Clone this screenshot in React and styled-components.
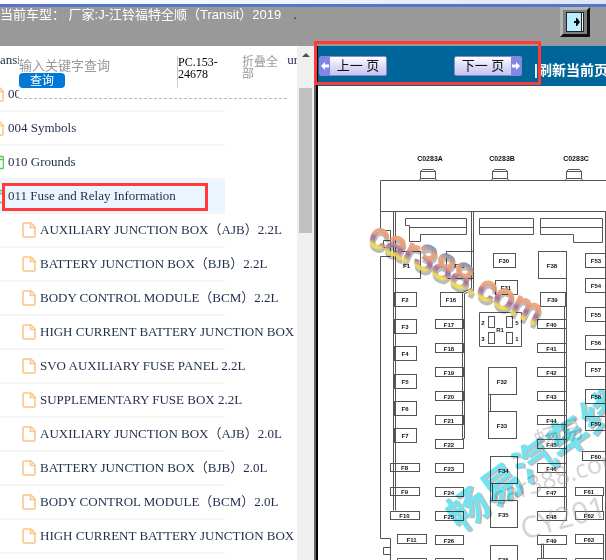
import React from 'react';
import styled, { createGlobalStyle } from 'styled-components';

const tree = [
  { title: '00', type: 'file' },
  { title: '004 Symbols', type: 'file' },
  { title: '010 Grounds', type: 'folder' },
  { title: '011 Fuse and Relay Information', type: 'folder', active: true },
  { title: 'AUXILIARY JUNCTION BOX（AJB）2.2L', type: 'file', nested: true },
  { title: 'BATTERY JUNCTION BOX（BJB）2.2L', type: 'file', nested: true },
  { title: 'BODY CONTROL MODULE（BCM）2.2L', type: 'file', nested: true },
  { title: 'HIGH CURRENT BATTERY JUNCTION BOX', type: 'file', nested: true },
  { title: 'SVO AUXILIARY FUSE PANEL 2.2L', type: 'file', nested: true },
  { title: 'SUPPLEMENTARY FUSE BOX 2.2L', type: 'file', nested: true },
  { title: 'AUXILIARY JUNCTION BOX（AJB）2.0L', type: 'file', nested: true },
  { title: 'BATTERY JUNCTION BOX（BJB）2.0L', type: 'file', nested: true },
  { title: 'BODY CONTROL MODULE（BCM）2.0L', type: 'file', nested: true },
  { title: 'HIGH CURRENT BATTERY JUNCTION BOX', type: 'file', nested: true }
];

// [label, x, y, width, height]
const fuses = [
  ['F1', 393, 251, 27, 27],
  ['F2', 394, 292, 22, 14],
  ['F3', 394, 319, 22, 14],
  ['F4', 394, 346, 22, 14],
  ['F5', 394, 374, 22, 14],
  ['F6', 394, 401, 22, 14],
  ['F7', 394, 428, 22, 14],
  ['F8', 390, 463, 29, 8],
  ['F9', 390, 487, 29, 8],
  ['F10', 390, 511, 29, 8],
  ['F11', 397, 534, 29, 9],
  ['F15', 446, 251, 27, 27],
  ['F16', 440, 292, 22, 14],
  ['F30', 493, 253, 22, 14],
  ['F31', 495, 280, 22, 14],
  ['F32', 488, 367, 28, 27],
  ['F33', 488, 411, 28, 27],
  ['F34', 490, 456, 27, 27],
  ['F35', 490, 500, 27, 27],
  ['F36', 490, 545, 27, 27],
  ['F38', 538, 251, 28, 27],
  ['F39', 540, 292, 25, 14],
  ['F53', 585, 253, 22, 14],
  ['F54', 585, 278, 22, 14],
  ['F55', 585, 307, 22, 14],
  ['F56', 585, 335, 22, 14],
  ['F57', 585, 362, 22, 14],
  ['F58', 585, 389, 22, 14],
  ['F59', 585, 416, 22, 14],
  ['F60', 582, 451, 28, 9],
  ['F61', 575, 487, 28, 8],
  ['F62', 575, 511, 28, 8],
  ['F63', 575, 534, 28, 9]
];

for (let i = 0; i < 10; i++) {
  fuses.push([`F${17 + i}`, 435, 319 + i * 24, 28, 9]);
  fuses.push([`F${40 + i}`, 537, 319 + i * 24, 29, 9]);
}

const connectors = [
  ['C0283A', 428],
  ['C0283B', 500],
  ['C0283C', 574]
];

const relayPins = [
  ['2', 488, 316, 483],
  ['5', 506, 316, 517],
  ['3', 488, 332, 483],
  ['1', 506, 332, 517]
];

const FileIcon = () => (
  <TreeIcon viewBox="0 0 14 16" stroke="#fcc384">
    <path d="M2 1h7l4 4v9q0 1-1 1H2q-1 0-1-1V2q0-1 1-1z" />
    <path d="M8.500 1v4.500H13" />
  </TreeIcon>
);

const FolderIcon = () => (
  <TreeIcon viewBox="0 0 14 16" stroke="#5cc45c">
    <path d="M2 2.500h10.500q1 0 1 1v10q0 1-1 1H2q-1 0-1-1v-10q0-1 1-1zM1 5.500h12" />
  </TreeIcon>
);

const FuseDiagram = () => (
  <Diagram viewBox="318 86 288 474" role="img" aria-label="Fuse box diagram">
    <defs>
      <linearGradient id="mark" x1="0" y1="0" x2="0" y2="1">
        <stop offset="0.200" stopColor="#7d8fb0" />
        <stop offset="0.350" stopColor="#f0a070" />
        <stop offset="0.500" stopColor="#e59a78" />
        <stop offset="0.600" stopColor="#9a6aa0" />
        <stop offset="0.680" stopColor="#b88a90" />
        <stop offset="0.760" stopColor="#efdd50" />
      </linearGradient>
    </defs>

    <g fill="none" stroke="#555" transform="translate(0.5 0.5)">
      <path d="M610 180H380V230H390V247H383V240H390M390 247V256H380V538H390V560M390 554H383V547H390" />
      <path d="M380 211H610M605 211V560" />
      <path d="M393 211V510M395 211V510" />
      <path d="M471 211V288L462 292V438M473 211V290L464 293V438H462" />
      <path d="M564 306V510M566 278V510" />
      <path d="M488 394V411M490 394V411M490 483V500M492 483V500" />
      <path d="M541 543V558M543 543V558M602 495V511M603 543V558" />
      <path d="M397 560V558H426V560M435 560V558H463V560M537 560V558H566V560M575 560V558H603V560" />
      <path d="M405 218H466V234H420V241H409V225H405ZM409 227H466" />
      <path d="M479 218H533V234H479ZM479 227H533" />
      <path d="M540 218H602V242H573V234H540ZM540 227H602" />
      <path d="M479 312H521V346H479Z" />
      {connectors.map(([label, x]) => (
        <path key={label} d={`M${x - 9} 180L${x - 8} 178V171L${x - 6} 169H${x + 5}L${x + 7} 171V178L${x + 8} 180M${x - 8} 171H${x + 7}M${x - 8} 178H${x + 7}`} />
      ))}
      {relayPins.map(([pin, x, y]) => (
        <rect key={pin} x={x} y={y} width="6" height="11" />
      ))}
      {fuses.map(([label, x, y, w, h]) => (
        <rect key={label} x={x} y={y} width={w} height={h} />
      ))}
    </g>

    <DiagramLabels>
      {connectors.map(([label, x]) => (
        <ConnectorLabel key={label} x={x + 2} y="161">{label}</ConnectorLabel>
      ))}
      {fuses.map(([label, x, y, w, h]) => (
        <text key={label} x={x + w / 2} y={y + h / 2 + 3}>{label}</text>
      ))}
      {relayPins.map(([pin, , y, x]) => (
        <text key={pin} x={x} y={y + 9}>{pin}</text>
      ))}
      <text x="500" y="332">R1</text>
    </DiagramLabels>

    <GrayMark>
      <text fontSize="25" transform="translate(538 451) rotate(-18)">畅易</text>
      <text fontSize="25" transform="translate(496 506) rotate(-18)">car388.com</text>
      <text fontSize="30" transform="translate(524 540) rotate(-16)">CY2019</text>
    </GrayMark>
    <Overprint transform="rotate(-36 460 533)">
      <BlueMark x="461" y="535" fill="#c9bab6">畅易汽车线</BlueMark>
      <BlueMark x="460" y="533" fill="#74e3f0">畅易汽车线</BlueMark>
    </Overprint>
    <Overprint transform="rotate(26 367 242)">
      <CarMark x="369" y="246" fill="#bbb" stroke="#bbb">car388.com</CarMark>
    </Overprint>
    <g opacity="0.9" transform="rotate(26 367 242)">
      <CarMark x="367" y="243" fill="url(#mark)" stroke="url(#mark)">car388.com</CarMark>
    </g>
  </Diagram>
);

const App = () => (
  <Page>
    <GlobalStyle />
    <WindowEdge />
    <Header>
      <Vehicle>当前车型： 厂家:J-江铃福特全顺（Transit）2019</Vehicle>
      <Dot>.</Dot>
      <ExitButton type="button" aria-label="退出">
        <svg width="18" height="20" viewBox="0 0 18 20">
          <path fill="#222" d="M0 0h18v20H0z" />
          <path fill="#b9efff" d="M1 1h14v18H1z" />
          <path fill="#fff" d="M16 1h1v18h-1z" />
          <path d="M8 9h2V6h1l3 4-3 4h-1v-3H8z" />
        </svg>
      </ExitButton>
    </Header>

    <Main>
      <Sidebar>
        <TreePane>
          <Tree>
            <RootRow>
              <span>ansit</span>
              <span>ur</span>
            </RootRow>
            {tree.map((item, index) => (
              <Row key={index} $nested={item.nested} $active={item.active}>
                {item.type === 'file' ? <FileIcon /> : <FolderIcon />}
                <a href="#tree">{item.title}</a>
                {item.active && <RowMark />}
              </Row>
            ))}
          </Tree>
          <SearchPanel>
            <SearchForm>
              <SearchInput placeholder="输入关键字查询" aria-label="输入关键字查询" />
              <SearchButton type="button">查询</SearchButton>
            </SearchForm>
            <Code>PC.153-24678</Code>
            <Collapse type="button">折叠全部</Collapse>
          </SearchPanel>
        </TreePane>
        <Scrollbar>
          <ScrollUp />
          <Thumb />
        </Scrollbar>
      </Sidebar>

      <Content>
        <Toolbar>
          <PageButton type="button">
            <Arrow viewBox="0 0 10 16">
              <path d="M1 8l4-4v2.500h4v3H5V12z" />
            </Arrow>
            <span>上一 页</span>
          </PageButton>
          <PageButton type="button">
            <span>下一 页</span>
            <Arrow viewBox="0 0 10 16">
              <path d="M9 8L5 4v2.500H1v3h4V12z" />
            </Arrow>
          </PageButton>
          <Refresh href="#refresh">|刷新当前页</Refresh>
          <ToolbarMark />
        </Toolbar>
        <FuseDiagram />
      </Content>
    </Main>
  </Page>
);

const GlobalStyle = createGlobalStyle`
  * {
    box-sizing: border-box;
  }

  body {
    margin: 0;
    background: #fff;
    font-family: 'Liberation Serif', 'Noto Sans CJK SC', serif;
    font-size: 13px;
    color: #1f2d4a;
  }

  button,
  input {
    margin: 0;
    padding: 0;
    border: 0;
    background: none;
    font-family: 'Liberation Sans', 'Noto Sans CJK SC', sans-serif;
  }

  a {
    color: inherit;
    text-decoration: none;
  }
`;

const Page = styled.div`
  display: flex;
  flex-direction: column;
  height: 100vh;
  overflow: hidden;
`;

const WindowEdge = styled.div`
  flex: none;
  height: 7px;
  background: linear-gradient(90deg, #fff, #dfe6f7);
  border-bottom: 3px solid #5577c9;
`;

const Header = styled.header`
  display: flex;
  flex: none;
  align-items: flex-start;
  height: 39px;
  padding-right: 16px;
  background: #999;
  color: #fff;
  font-family: 'Liberation Sans', 'Noto Sans CJK SC', sans-serif;
  line-height: 16px;
  white-space: pre;
`;

const Vehicle = styled.span`
  flex: none;
`;

const Dot = styled.span`
  margin-left: 12px;
  color: #222;
`;

const ExitButton = styled.button`
  display: flex;
  align-items: center;
  justify-content: center;
  width: 30px;
  height: 30px;
  margin-left: auto;
  border: 3px solid;
  border-color: #b4b4b4 #111 #111 #b4b4b4;
  background: #808080;
`;

const Main = styled.main`
  display: flex;
  flex: 1;
  min-height: 0;
`;

const Sidebar = styled.aside`
  display: flex;
  flex: 0 0 316px;
  border-right: 2px solid #666;
`;

const TreePane = styled.div`
  position: relative;
  flex: 1;
  overflow: hidden;
`;

const Tree = styled.ul`
  width: 235px;
  margin: -2px 0 0 -10px;
  padding: 0;
  list-style: none;
`;

const RootRow = styled.li`
  display: flex;
  justify-content: space-between;
  width: 308px;
  height: 34px;
  padding-left: 10px;
  line-height: 32px;
`;

const Row = styled.li`
  position: relative;
  display: flex;
  align-items: center;
  gap: 4px;
  height: 34px;
  padding-left: ${({ $nested }) => ($nested ? 32 : 0)}px;
  border-bottom: 2px solid #f5f5f5;
  background: ${({ $active }) => ($active ? '#ebf5ff' : 'transparent')};
  line-height: 16px;
  white-space: nowrap;
`;

const RowMark = styled.div`
  position: absolute;
  top: 3px;
  left: 12px;
  width: 206px;
  height: 28px;
  border: 3px solid #ff3a38;
`;

const TreeIcon = styled.svg`
  flex: none;
  width: 14px;
  height: 16px;
  fill: none;
  stroke-width: 1.500;
`;

const SearchPanel = styled.div`
  position: absolute;
  top: 0;
  left: 19px;
  display: flex;
  align-items: flex-start;
  width: 268px;
  height: 53px;
  padding-top: 10px;
  border-bottom: 1px dashed #bbb;
  background: #fff;
`;

const SearchForm = styled.div`
  display: flex;
  flex-direction: column;
  align-items: flex-start;
  width: 158px;
  padding-top: 2px;
`;

const SearchInput = styled.input`
  width: 100%;
  height: 15px;
  font-size: 13px;

  &::placeholder {
    color: #999;
  }
`;

const SearchButton = styled.button`
  width: 46px;
  height: 15px;
  border-radius: 4px;
  background: #0078d4;
  color: #fff;
  font-size: 12px;
  line-height: 14px;
`;

const Code = styled.div`
  width: 65px;
  height: 32px;
  border-left: 1px solid #ccc;
  color: #000;
  font-size: 12px;
  line-height: 12px;
`;

const Collapse = styled.button`
  width: 40px;
  color: #999;
  font-size: 12px;
  line-height: 12px;
  text-align: left;
`;

const Scrollbar = styled.div`
  display: flex;
  flex-direction: column;
  align-items: center;
  width: 17px;
  background: #f0f0f0;
`;

const ScrollUp = styled.div`
  margin: 7px 0 31px;
  border: 4px solid transparent;
  border-top: 0;
  border-bottom-color: #505050;
`;

const Thumb = styled.div`
  width: 13px;
  height: 145px;
  background: #c1c1c1;
`;

const Content = styled.section`
  flex: 1;
  min-width: 0;
  border-left: 2px solid #000;
`;

const Toolbar = styled.nav`
  position: relative;
  display: flex;
  align-items: center;
  height: 40px;
  background: #006699;
  white-space: nowrap;
`;

const PageButton = styled.button`
  display: flex;
  flex: none;
  align-items: center;
  justify-content: space-between;
  width: 68px;
  height: 20px;
  margin-left: 1px;
  border: 1px solid #8a86cc;
  border-radius: 2px;
  background: linear-gradient(#fff, #dcdcfa 50%, #c6c6f4);
  color: #111;
  font-size: 13px;
  line-height: 18px;

  & + & {
    margin-left: 67px;
  }

  span {
    flex: 1;
  }
`;

const Arrow = styled.svg`
  width: 10px;
  height: 18px;
  background: #7f86e6;
  fill: #fff;
`;

const Refresh = styled.a`
  padding: 8px 0 0 12px;
  color: #fff;
  font-family: 'Liberation Sans', 'Noto Sans CJK SC', sans-serif;
  font-size: 14px;
  font-weight: bold;
  line-height: 18px;
`;

const ToolbarMark = styled.div`
  position: absolute;
  top: -5px;
  left: -4px;
  width: 227px;
  height: 44px;
  border: 3px solid #ff3a38;
`;

const Diagram = styled.svg`
  display: block;
  width: 288px;
  height: 474px;
`;

const DiagramLabels = styled.g`
  fill: #111;
  font-family: 'Liberation Sans', sans-serif;
  font-size: 6px;
  font-weight: bold;
  text-anchor: middle;
`;

const ConnectorLabel = styled.text`
  font-size: 7px;
`;

const GrayMark = styled.g`
  fill: #999;
  opacity: 0.4;
  font-family: 'Noto Sans', 'Noto Sans CJK SC', sans-serif;
`;

const Overprint = styled.g`
  mix-blend-mode: multiply;
`;

const BlueMark = styled.text`
  font-family: 'Noto Sans CJK SC', sans-serif;
  font-size: 41px;
  font-weight: bold;
`;

const CarMark = styled.text`
  font-family: 'Liberation Sans', sans-serif;
  font-size: 36px;
  stroke-width: 2;
  stroke-linejoin: round;
`;

export default App;
